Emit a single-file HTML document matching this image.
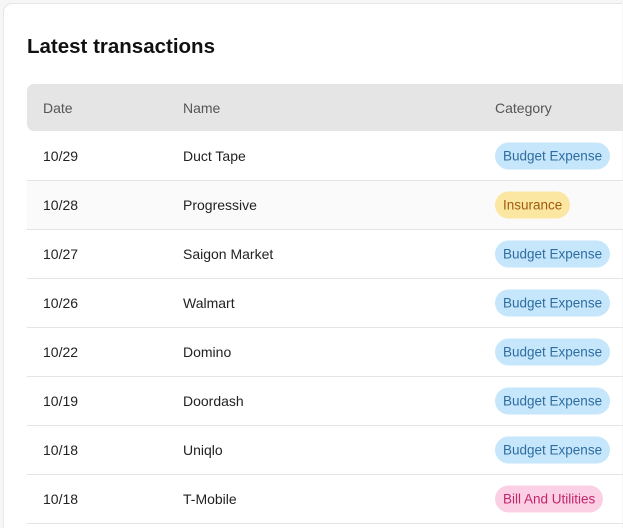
<!DOCTYPE html>
<html><head><style>
html,body{margin:0;width:623px;height:528px;overflow:hidden}
body{background:#f6f6f6;font-family:"Liberation Sans",sans-serif;position:relative}
.card{position:absolute;left:3px;top:3px;width:619px;height:525px;background:#fff;border:1px solid #e6e6e6;border-right:none;border-bottom:none;border-radius:9px 0 0 0;box-sizing:border-box}
h1{position:absolute;left:27px;top:35px;margin:0;font-size:20.5px;font-weight:bold;color:#111}
.head{position:absolute;left:27px;top:84px;width:596px;height:47px;background:#e5e5e5;border-radius:7px 0 0 7px;color:#555;font-size:14px}
.row{position:absolute;left:27px;width:596px;height:48px;border-bottom:1px solid #e4e4e4;font-size:14px;color:#222}
.c{position:absolute;top:50%;transform:translateY(-50%)}
.d{left:16px}.n{left:156px}.k{left:468px}
.p{padding:6px 8px;border-radius:14px;font-size:13.5px;white-space:nowrap}
.b{background:#c6e6fb;color:#2e6da1}.y{background:#fbe7a1;color:#a05a0d}.r{background:#fbd0e4;color:#c1266c}
</style></head><body>
<div class="card"></div>
<h1>Latest transactions</h1>
<div class="head"><span class="c d">Date</span><span class="c n">Name</span><span class="c k">Category</span></div>
<div class="row" style="top:132px"><span class="c d">10/29</span><span class="c n">Duct Tape</span><span class="c k p b">Budget Expense</span></div>
<div class="row" style="top:181px;background:#fafafa"><span class="c d">10/28</span><span class="c n">Progressive</span><span class="c k p y">Insurance</span></div>
<div class="row" style="top:230px"><span class="c d">10/27</span><span class="c n">Saigon Market</span><span class="c k p b">Budget Expense</span></div>
<div class="row" style="top:279px"><span class="c d">10/26</span><span class="c n">Walmart</span><span class="c k p b">Budget Expense</span></div>
<div class="row" style="top:328px"><span class="c d">10/22</span><span class="c n">Domino</span><span class="c k p b">Budget Expense</span></div>
<div class="row" style="top:377px"><span class="c d">10/19</span><span class="c n">Doordash</span><span class="c k p b">Budget Expense</span></div>
<div class="row" style="top:426px"><span class="c d">10/18</span><span class="c n">Uniqlo</span><span class="c k p b">Budget Expense</span></div>
<div class="row" style="top:475px"><span class="c d">10/18</span><span class="c n">T-Mobile</span><span class="c k p r">Bill And Utilities</span></div>
</body></html>
